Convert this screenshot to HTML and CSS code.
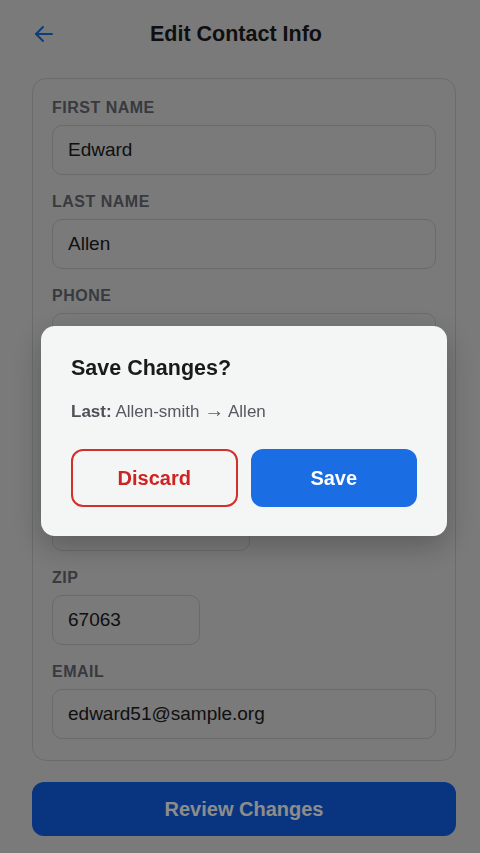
FILE: index.html
```html
<!DOCTYPE html>
<html lang="en">
<head>
  <meta charset="UTF-8">
  <meta name="viewport" content="width=device-width, initial-scale=1.0">
  <title>Edit Contact Info</title>
  <link rel="stylesheet" href="styles.css">
</head>
<body>
<header class="topbar">
  <button class="back-btn" aria-label="Back">
    <svg width="24" height="24" viewBox="0 0 24 24" fill="none" stroke="currentColor" stroke-width="2" stroke-linecap="round" stroke-linejoin="round">
      <path d="M20 12H4"/>
      <path d="M11 5l-7 7 7 7"/>
    </svg>
  </button>
  <h1>Edit Contact Info</h1>
</header>

<main class="page">
  <form class="card">
    <div class="field">
      <label for="first">First Name</label>
      <input id="first" type="text" value="Edward">
    </div>
    <div class="field">
      <label for="last">Last Name</label>
      <input id="last" type="text" value="Allen">
    </div>
    <div class="field">
      <label for="phone">Phone</label>
      <input id="phone" type="tel" value="(555) 201-7788">
    </div>
    <div class="field">
      <label for="street">Street</label>
      <input id="street" type="text" value="418 Maple Ave">
    </div>
    <div class="field">
      <label for="city">City</label>
      <input id="city" class="input-md" type="text" value="Newton">
    </div>
    <div class="field">
      <label for="zip">Zip</label>
      <input id="zip" class="input-sm" type="text" value="67063">
    </div>
    <div class="field">
      <label for="email">Email</label>
      <input id="email" type="email" value="edward51@sample.org">
    </div>
  </form>

  <button class="review-btn">Review Changes</button>
</main>

<div class="overlay">
  <div class="dialog">
    <h2>Save Changes?</h2>
    <p class="diff"><b>Last:</b> Allen-smith <span class="arrow">→</span> Allen</p>
    <div class="actions">
      <button class="btn btn-discard">Discard</button>
      <button class="btn btn-save">Save</button>
    </div>
  </div>
</div>
</body>
</html>
```

FILE: styles.css
```css
body {
  font-family: "Liberation Sans", Arial, sans-serif;
  background-color: #dedede;
  color: #1e1e1e;
  margin: 0;
  padding: 0;
}
.topbar {
  display: flex;
  align-items: center;
  height: 24px;
  padding: 22px 64px 32px 32px;
}
.back-btn {
  display: flex;
  width: 24px;
  height: 24px;
  padding: 0;
  border: none;
  background: none;
  color: #1a6fe0;
}
.topbar h1 {
  flex: 1;
  margin: 0;
  font-size: 21.5px;
  line-height: 24px;
  text-align: center;
  color: #1c1c1e;
}
.page {
  padding: 0 24px 0 32px;
}
.card {
  padding: 19px 19px 4px;
  border: 1px solid #c4c4c4;
  border-radius: 14px;
}
.field {
  margin-bottom: 17px;
}
.field label {
  display: block;
  margin-bottom: 7px;
  font-size: 16px;
  line-height: 20px;
  font-weight: bold;
  text-transform: uppercase;
  letter-spacing: 0.5px;
  color: #676b73;
}
.field input {
  display: block;
  box-sizing: border-box;
  width: 100%;
  height: 50px;
  padding: 0 15px;
  border: 1px solid #c2c2c2;
  border-radius: 10px;
  background: transparent;
  font-family: inherit;
  font-size: 19px;
  color: #202020;
}
.field .input-md {
  width: 198px;
}
.field .input-sm {
  width: 148px;
}
.review-btn {
  display: block;
  width: 100%;
  height: 54px;
  margin-top: 21px;
  border: none;
  border-radius: 12px;
  background-color: #1260e9;
  color: #fff;
  font-family: inherit;
  font-size: 20px;
  font-weight: bold;
}

/* confirm dialog */
.overlay {
  position: fixed;
  inset: 0;
  display: flex;
  align-items: center;
  justify-content: center;
  padding: 9px 24px 0 32px;
  background-color: rgba(0, 0, 0, 0.45);
}
.dialog {
  box-sizing: border-box;
  width: 406px;
  padding: 30px 30px 29px;
  background-color: #f4f5f5;
  border-radius: 14px;
  box-shadow: 0 10px 30px rgba(0, 0, 0, 0.25);
}
.dialog h2 {
  margin: 0 0 20px;
  font-size: 21.5px;
  line-height: 24px;
  color: #1a1a1a;
}
.diff {
  margin: 0 0 27px;
  font-size: 17px;
  line-height: 20px;
  color: #565a60;
}
.diff b {
  color: #4d5157;
}
.diff .arrow {
  font-size: 20px;
  line-height: 20px;
}
.actions {
  display: grid;
  grid-template-columns: 1fr 1fr;
  gap: 13px;
}
.btn {
  height: 58px;
  border-radius: 12px;
  font-family: inherit;
  font-size: 20px;
  font-weight: bold;
}
.btn-discard {
  border: 2px solid #d3302a;
  background-color: transparent;
  color: #cf2222;
}
.btn-save {
  border: none;
  background-color: #1a6de3;
  color: #fff;
}
```
